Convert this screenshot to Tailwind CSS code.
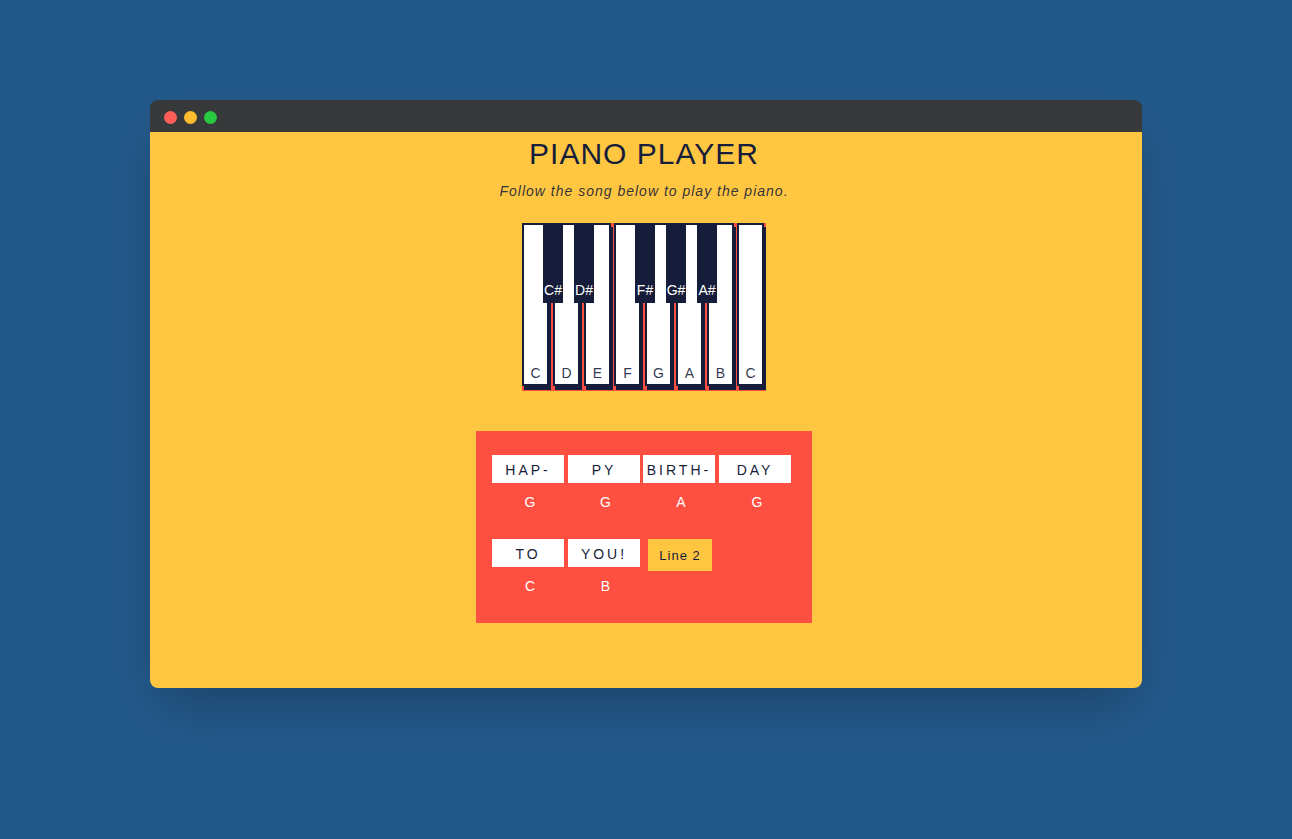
<!DOCTYPE html>
<html lang="en">
<head>
<meta charset="utf-8">
<meta name="viewport" content="width=device-width, initial-scale=1">
<title>Piano Player</title>
<script src="https://cdn.jsdelivr.net/npm/@tailwindcss/browser@4"></script>
</head>
<body class="min-h-screen bg-[#23598a] px-4 py-25 font-['Liberation_Sans',Arial,sans-serif] text-sm text-[#161d3a] md:px-[150px]">
<div class="rounded-lg shadow-2xl">
  <header class="flex h-8 items-center gap-[7px] rounded-t-lg bg-[#38393b] pt-0.5 pl-[14px]">
    <span class="size-[13px] rounded-full bg-[#ff5f57]"></span>
    <span class="size-[13px] rounded-full bg-[#febc2e]"></span>
    <span class="size-[13px] rounded-full bg-[#28c840]"></span>
  </header>
  <main class="flex flex-col items-center rounded-b-lg bg-[#ffc641] pr-1 pb-[65px]">
    <h1 class="mt-1 text-[30px] leading-9 tracking-[1px]">PIANO PLAYER</h1>
    <p class="mt-[9px] leading-5 tracking-[1px] text-[#161d3a]/90 italic">Follow the song below to play the piano.</p>

    <div class="mt-[22px] flex h-[168px] items-start bg-[#ff4f40]" role="group" aria-label="Piano keys">
      <button class="flex h-[163px] w-[27px] items-end justify-center border-2 border-[#161d3a] bg-white pb-px text-[#161d3a]/90 shadow-[2px_4px_0_#161d3a]">C</button>
      <button class="z-10 -mr-[10px] -ml-[6px] flex h-20 w-5 items-end justify-center bg-[#161d3a] pb-[3px] text-white">C#</button>
      <button class="flex h-[163px] w-[27px] items-end justify-center border-2 border-[#161d3a] bg-white pb-px text-[#161d3a]/90 shadow-[2px_4px_0_#161d3a]">D</button>
      <button class="z-10 -mr-[10px] -ml-[6px] flex h-20 w-5 items-end justify-center bg-[#161d3a] pb-[3px] text-white">D#</button>
      <button class="mr-[3px] flex h-[163px] w-[27px] items-end justify-center border-2 border-[#161d3a] bg-white pb-px text-[#161d3a]/90 shadow-[2px_4px_0_#161d3a]">E</button>
      <button class="flex h-[163px] w-[27px] items-end justify-center border-2 border-[#161d3a] bg-white pb-px text-[#161d3a]/90 shadow-[2px_4px_0_#161d3a]">F</button>
      <button class="z-10 -mr-[10px] -ml-[6px] flex h-20 w-5 items-end justify-center bg-[#161d3a] pb-[3px] text-white">F#</button>
      <button class="flex h-[163px] w-[27px] items-end justify-center border-2 border-[#161d3a] bg-white pb-px text-[#161d3a]/90 shadow-[2px_4px_0_#161d3a]">G</button>
      <button class="z-10 -mr-[10px] -ml-[6px] flex h-20 w-5 items-end justify-center bg-[#161d3a] pb-[3px] text-white">G#</button>
      <button class="flex h-[163px] w-[27px] items-end justify-center border-2 border-[#161d3a] bg-white pb-px text-[#161d3a]/90 shadow-[2px_4px_0_#161d3a]">A</button>
      <button class="z-10 -mr-[10px] -ml-[6px] flex h-20 w-5 items-end justify-center bg-[#161d3a] pb-[3px] text-white">A#</button>
      <button class="mr-[3px] flex h-[163px] w-[27px] items-end justify-center border-2 border-[#161d3a] bg-white pb-px text-[#161d3a]/90 shadow-[2px_4px_0_#161d3a]">B</button>
      <button class="mr-0.5 flex h-[163px] w-[27px] items-end justify-center border-2 border-[#161d3a] bg-white pb-px text-[#161d3a]/90 shadow-[2px_4px_0_#161d3a]">C</button>
    </div>

    <section class="mt-10 w-full max-w-[336px] bg-[#ff4f40] px-4 py-6" aria-label="Song">
      <div class="grid grid-cols-[76px_75px_76px_76px] gap-y-6">
        <div class="text-center"><div class="h-7 w-[72px] bg-white pt-[5px] leading-5 tracking-[3px]">HAP-</div><div class="mt-[9px] h-[23px] leading-5 text-white">G</div></div>
        <div class="text-center"><div class="h-7 w-[72px] bg-white pt-[5px] leading-5 tracking-[3px]">PY</div><div class="mt-[9px] h-[23px] leading-5 text-white">G</div></div>
        <div class="text-center"><div class="h-7 w-[72px] bg-white pt-[5px] leading-5 tracking-[3px]">BIRTH-</div><div class="mt-[9px] h-[23px] leading-5 text-white">A</div></div>
        <div class="text-center"><div class="h-7 w-[72px] bg-white pt-[5px] leading-5 tracking-[3px]">DAY</div><div class="mt-[9px] h-[23px] leading-5 text-white">G</div></div>
        <div class="text-center"><div class="h-7 w-[72px] bg-white pt-[5px] leading-5 tracking-[3px]">TO</div><div class="mt-[9px] h-[23px] leading-5 text-white">C</div></div>
        <div class="text-center"><div class="h-7 w-[72px] bg-white pt-[5px] leading-5 tracking-[3px]">YOU!</div><div class="mt-[9px] h-[23px] leading-5 text-white">B</div></div>
        <button class="ml-[5px] h-8 w-16 bg-[#ffc641] pt-0.5 text-[13px] tracking-[1px]">Line 2</button>
      </div>
    </section>
  </main>
</div>
</body>
</html>
